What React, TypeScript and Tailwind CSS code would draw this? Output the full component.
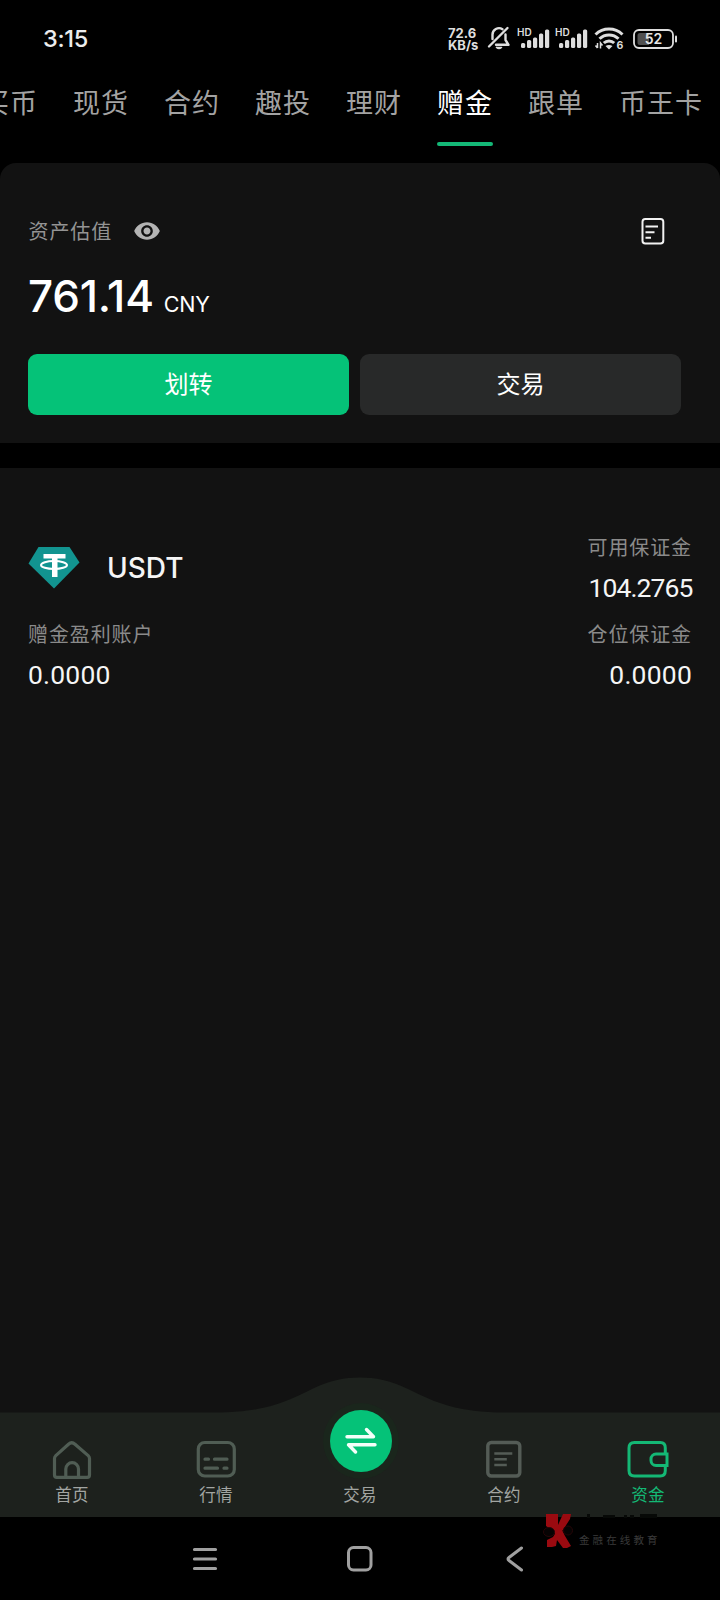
import React from 'react';
import { MdRemoveRedEye } from 'react-icons/md';

const tabs = ['买币', '现货', '合约', '趣投', '理财', '赠金', '跟单', '币王卡'];
const ACTIVE_TAB = '赠金';

const BellOffIcon = () => (
  <svg className="w-[24px] h-[26px]" viewBox="0 0 24 26" fill="none" stroke="#dedede" strokeWidth="2.4" strokeLinecap="round" strokeLinejoin="round">
    <path d="M5.500 14V9.800a6.500 6.500 0 0 1 10-5.600M18.500 9.500v5.500L21.500 19.800H9" />
    <path d="M20.500 3L2 21.500" />
    <path d="M9.500 22.500h5q-2.500 2-5 0" strokeWidth="1.600" fill="#dedede" />
  </svg>
);

const SignalIcon = () => (
  <svg className="w-[33px] h-[22px]" viewBox="0 0 33 22" fill="#dedede">
    <text x="0" y="9" fontSize="10" fontWeight="600" fontFamily="Inter, sans-serif">HD</text>
    <rect x="4" y="16" width="4.200" height="5" rx="1.500" />
    <rect x="10" y="13" width="4.200" height="8" rx="1.500" />
    <rect x="16" y="10.500" width="4.200" height="10.500" rx="1.500" />
    <rect x="22" y="6.500" width="4.200" height="14.500" rx="1.500" />
    <rect x="28" y="2.500" width="4.200" height="18.500" rx="1.500" />
  </svg>
);

const WifiIcon = () => (
  <svg className="w-[30px] h-[24px] overflow-visible" viewBox="0 0 30 24" fill="none" stroke="#dedede" strokeWidth="3">
    <path d="M1.500 8.500a19.500 19.500 0 0 1 27 0" />
    <path d="M5.500 12.800a13.500 13.500 0 0 1 19 0" />
    <path d="M9.800 17a7.500 7.500 0 0 1 10.400 0" />
    <path d="M11.500 20q3.500-2 7 0L15 23.500z" fill="#dedede" stroke="none" />
    <path d="M3.500 17v5M1.500 19.500l2 2.500M6.500 22.500v-5.500l2 2.500" strokeWidth="1.500" />
    <text x="22.500" y="23" fontSize="10.500" fontWeight="700" fontFamily="Inter, sans-serif" fill="#dedede" stroke="none">6</text>
  </svg>
);

const BatteryIcon = () => (
  <svg className="w-[45px] h-[20px]" viewBox="0 0 45 20" fill="none">
    <rect x="1" y="1" width="39" height="18" rx="5" stroke="#dedede" strokeWidth="1.800" />
    <path d="M7 4h9v12H7a2.500 2.500 0 0 1-2.500-2.500v-7A2.500 2.500 0 0 1 7 4z" fill="#505050" />
    <rect x="42" y="6.500" width="2" height="7" rx="1" fill="#dedede" />
    <text x="20.500" y="15" textAnchor="middle" fontSize="14" fontWeight="600" fontFamily="Inter, sans-serif" fill="#e6e6e6">52</text>
  </svg>
);

const RecordIcon = () => (
  <svg className="w-[24px] h-[28px]" viewBox="0 0 24 28" fill="none" stroke="#f2f2f2" strokeWidth="2">
    <rect x="1.500" y="2" width="20.800" height="24.500" rx="2.800" />
    <path d="M4.500 9.500h12.500M4.500 15.300h9M4.500 20.800h5.500" />
  </svg>
);

const TetherIcon = () => (
  <svg className="w-[52px] h-[42px]" viewBox="0 0 52 42">
    <path d="M10.500 0h31L51.500 15.500 26 41.500.500 16.500z" fill="#129490" />
    <path d="M15.500 7h22v4.500h-8V30h-5.500V11.500h-8.500z" fill="#fff" />
    <ellipse cx="26" cy="18" rx="13" ry="4" fill="none" stroke="#fff" strokeWidth="2" />
  </svg>
);

const HomeIcon = () => (
  <svg className="w-[40px] h-[40px]" viewBox="0 0 40 40" fill="none" stroke="#505d54" strokeWidth="3.200" strokeLinejoin="round">
    <path d="M2.500 18.500c0-1.200.4-2 1.300-2.900L16.500 4.200c1.900-1.700 4.600-1.700 6.500 0l13.200 11.400c.9.900 1.300 1.700 1.300 2.900V35c0 1.600-.8 2.300-2.300 2.300H4.800c-1.500 0-2.300-.7-2.300-2.300z" />
    <path d="M13.800 37v-8a6.300 6.300 0 0 1 12.700 0v8" />
  </svg>
);

const MarketIcon = () => (
  <svg className="w-[40px] h-[40px]" viewBox="0 0 40 40" fill="none" stroke="#505d54" strokeWidth="3.200" strokeLinecap="round">
    <rect x="2.300" y="2.500" width="36" height="33.500" rx="6.500" />
    <path d="M9 19.200h3.500M18.500 19.200H31M9 28.200h12.500M28 28.200h3" />
  </svg>
);

const ContractIcon = () => (
  <svg className="w-[40px] h-[40px]" viewBox="0 0 40 40" fill="none" stroke="#545c56" strokeWidth="3.400">
    <rect x="3.800" y="2.500" width="32" height="33.500" rx="3.500" />
    <path d="M10.300 13.500h18M10.300 19.300h12.500M10.300 25h12.500" strokeWidth="2.500" />
  </svg>
);

const WalletIcon = () => (
  <svg className="w-[42px] h-[40px]" viewBox="0 0 42 40" fill="none" stroke="#14b875" strokeWidth="3">
    <path d="M38.300 14V8c0-3.500-1.500-5.500-5-5.500H7.500C4 2.500 2 4.500 2 8v22.500C2 34 4 36 7.500 36h25.800c3.500 0 5-2 5-5.500V26" />
    <path d="M40 14H29a5 5 0 0 0-5 5v1.500a5 5 0 0 0 5 5h11z" />
  </svg>
);

const SwapIcon = () => (
  <svg className="w-[32px] h-[28px]" viewBox="0 0 32 28" fill="none" stroke="#f4fff9" strokeWidth="3.400" strokeLinecap="round" strokeLinejoin="round">
    <path d="M2 10.800h26.500L21.500 3.500" />
    <path d="M30 18.800H3.500L10.500 26" />
  </svg>
);

interface NavItem {
  label: string;
  icon: React.ReactNode;
  active?: boolean;
}

const navItems: NavItem[] = [
  { label: '首页', icon: <HomeIcon /> },
  { label: '行情', icon: <MarketIcon /> },
  { label: '交易', icon: null },
  { label: '合约', icon: <ContractIcon /> },
  { label: '资金', icon: <WalletIcon />, active: true },
];

const StatusBar = () => (
  <div className="flex h-[76px] items-center justify-between pl-[43px] pr-[42px]">
    <span className="pt-[2px] text-[23.500px] font-medium tracking-[-0.3px] text-[#ececec] leading-none">3:15</span>
    <div className="flex items-center">
      <div className="mr-[6px] w-[33px] whitespace-nowrap pt-[2px] text-[13px] font-bold leading-[12.500px] text-[#dedede]">
        <div>72.6</div>
        <div>KB/s</div>
      </div>
      <BellOffIcon />
      <div className="ml-[6px] flex gap-[5px]">
        <SignalIcon />
        <SignalIcon />
      </div>
      <div className="ml-[6px] mr-[9px]">
        <WifiIcon />
      </div>
      <div className="pt-[1px]">
        <BatteryIcon />
      </div>
    </div>
  </div>
);

const TabBar = () => (
  <div className="flex h-[87px] gap-[35px] overflow-hidden">
    {tabs.map((tab, i) => (
      <div
        key={tab}
        className={`flex shrink-0 flex-col items-center whitespace-nowrap text-[27px] leading-[56px] tracking-[1px] ${i === 0 ? '-ml-[18px]' : ''} ${
          tab === ACTIVE_TAB ? 'text-white' : 'text-[#a3a3a3]'
        }`}
      >
        {tab}
        {tab === ACTIVE_TAB && <div className="mt-[10px] h-[4px] w-full rounded-full bg-[#14b877]" />}
      </div>
    ))}
  </div>
);

const Balance = () => (
  <section className="h-[280px] rounded-t-2xl bg-[#121212] px-7 pt-[50px]">
    <div className="flex h-9 items-center justify-between">
      <div className="flex items-center">
        <span className="ml-[0.5px] pt-[2px] text-[20px] tracking-[0.9px] text-[#949494]">资产估值</span>
        <MdRemoveRedEye className="ml-[21px] h-7 w-7 text-[#b4b4b4]" />
      </div>
      <div className="mr-[27px]">
        <RecordIcon />
      </div>
    </div>
    <div className="mt-[17px] flex h-[60px] items-baseline text-white">
      <span className="text-[44px] font-medium leading-[60px] tracking-[-0.2px]">761.14</span>
      <span className="ml-[10px] text-[21.500px] tracking-[-0.3px]">CNY</span>
    </div>
    <div className="mr-[11px] mt-[28px] flex gap-[11px] text-[24px]">
      <button className="h-[61px] flex-1 rounded-[9px] bg-[#05c278] text-white">划转</button>
      <button className="h-[61px] flex-1 rounded-[9px] bg-[#282929] text-white">交易</button>
    </div>
  </section>
);

interface AmountProps {
  label: string;
  value: string;
  right?: boolean;
  tight?: boolean;
}

const Amount: React.FC<AmountProps> = ({ label, value, right, tight }) => (
  <div className={`flex flex-col ${right ? 'items-end' : 'items-start'}`}>
    <span className="pt-[1px] text-[20px] leading-[30px] tracking-[0.9px] text-[#8a8a8a]">{label}</span>
    <span
      className={`mt-[4px] font-[Roboto,sans-serif] text-[26.500px] leading-[41px] text-[#f5f5f5] ${
        tight ? 'mr-[-0.5px] tracking-[-0.9px]' : 'tracking-[0.2px]'
      }`}
    >
      {value}
    </span>
  </div>
);

const AssetPanel = () => (
  <section className="mt-[25px] h-[909px] bg-[#121212] px-7 pt-[64px]">
    <div className="flex h-[87px] justify-between">
      <div className="flex h-[72px] items-center">
        <TetherIcon />
        <span className="ml-[27px] text-[28px] font-medium text-[#f5f5f5]">USDT</span>
      </div>
      <Amount label="可用保证金" value="104.2765" right tight />
    </div>
    <div className="flex justify-between">
      <Amount label="赠金盈利账户" value="0.0000" />
      <Amount label="仓位保证金" value="0.0000" right />
    </div>
  </section>
);

const BottomNav = () => (
  <nav className="relative h-[140px] bg-[#121212]">
    {/* bar background with the raised middle */}
    <svg className="absolute inset-0 h-full w-full" viewBox="0 0 720 140">
      <path d="M0 35.500H215C262 35.500 284 26 312 12C330 3 345 .5 360 .5C375 .5 390 3 408 12C436 26 458 35.500 505 35.500H720V140H0z" fill="#1d211d" />
      <circle cx="361" cy="64" r="38" fill="#1a261c" />
    </svg>
    <div className="relative grid h-full grid-cols-5">
      {navItems.map((item) => (
        <div key={item.label} className="flex flex-col items-center">
          {item.icon ? (
            <div className="mt-[63px] h-[40px]">{item.icon}</div>
          ) : (
            <div className="ml-[1px] mt-[33px] flex h-[62px] w-[62px] items-center justify-center rounded-full bg-[#05c278] pb-[2px]">
              <SwapIcon />
            </div>
          )}
          <span
            className={`text-[16.500px] leading-[24px] tracking-[0.3px] ${item.icon ? 'mt-[3px]' : 'mt-[11px]'} ${
              item.active ? 'text-[#14b875]' : 'text-[#a2a5a2]'
            }`}
          >
            {item.label}
          </span>
        </div>
      ))}
    </div>
  </nav>
);

const Watermark = () => (
  <div className="absolute left-[543px] top-[-6px] flex h-[40px] items-end">
    <svg className="h-[40px] w-[32px]" viewBox="0 0 32 40">
      <path d="M3 3h12v11l5-11h8l-1 5-7 11-7 5-4-5-6-4z" fill="#9a0a10" />
      <path d="M4 29l6-3 5-8 4 1 3 6 6 10-4 2h-4l-6-8-1 6-4 1H4z" fill="#9a0a10" />
      <ellipse cx="6" cy="21" rx="5.500" ry="4.500" fill="#060303" stroke="#260608" />
      <ellipse cx="25" cy="19.500" rx="4.500" ry="4.500" fill="#060303" stroke="#260608" />
    </svg>
    <span className="ml-[4px] whitespace-nowrap pb-[4px] text-[10.500px] leading-[12px] tracking-[3.100px] text-[#3a3a3a]">金融在线教育</span>
    {/* wordmark tops that reach over the bar */}
    <svg className="absolute left-[36px] top-[3px] h-[4px] w-[80px]" viewBox="0 0 80 4" fill="#070907">
      <path d="M8 0h3v4H8zM24 1h12v3H24zM45 1h3v3h-3zM51 1h4v3h-4zM61 0h17v4H61z" />
    </svg>
  </div>
);

const SystemNav = () => (
  <div className="relative h-[83px] bg-black">
    <div className="flex h-full items-center justify-center gap-[127px]">
      <svg className="h-[28px] w-[28px]" viewBox="0 0 28 28" stroke="#a0a0a0" strokeWidth="3.200" strokeLinecap="round">
        <path d="M3.500 4.500h21M3.500 14h21M3.500 23.500h21" />
      </svg>
      <svg className="h-[28px] w-[28px]" viewBox="0 0 28 28" fill="none" stroke="#a0a0a0" strokeWidth="3">
        <rect x="2.500" y="2.500" width="22.500" height="22.500" rx="5" />
      </svg>
      <svg className="h-[28px] w-[28px]" viewBox="0 0 28 28" fill="none" stroke="#a0a0a0" strokeWidth="3" strokeLinecap="round" strokeLinejoin="round">
        <path d="M20.500 3L8 12.500q-2 1.500 0 3L20.500 25" />
      </svg>
    </div>
    <Watermark />
  </div>
);

const App: React.FC = () => {
  return (
    <div className="h-[1600px] w-[720px] overflow-hidden bg-black font-[Inter,'Noto_Sans_CJK_SC',sans-serif]">
      <StatusBar />
      <TabBar />
      <Balance />
      <AssetPanel />
      <BottomNav />
      <SystemNav />
    </div>
  );
};

export default App;
